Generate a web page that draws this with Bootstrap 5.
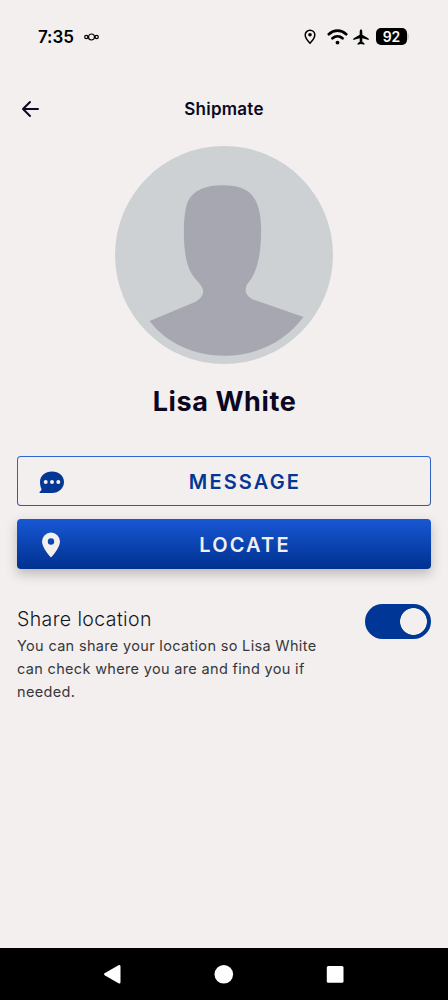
<!DOCTYPE html>
<html lang="en">
<head>
<meta charset="utf-8">
<meta name="viewport" content="width=device-width, initial-scale=1">
<title>Shipmate</title>
<link href="https://cdn.jsdelivr.net/npm/bootstrap@5.3.0/dist/css/bootstrap.min.css" rel="stylesheet">
<style>
body{background:#f2efee;font-family:Inter,"Open Sans",sans-serif;color:#0b0722}
svg{display:block;flex:none}
.screen{height:1000px;overflow:hidden}
.status{height:73px;padding:0 39px 0 38px;color:#000}
.clock{font-size:17px;font-weight:600;letter-spacing:-.1px;width:46px;line-height:20px}
.wifi{margin-left:11px}
.plane{margin-left:5px}
.battery{width:31px;height:17px;border-radius:5px;background:#000;color:#fff;font-size:14px;font-weight:600;line-height:17px;margin-left:7px}
.battery-cap{width:2px;height:7px;background:#cfcccb;border-radius:0 2px 2px 0}
.topbar{height:73px;padding:0 20px}
.topbar h1{font-size:17px;font-weight:600;letter-spacing:.25px}
.side{width:22px}
.person{font-size:27px;font-weight:700;line-height:34px;margin-top:21px;letter-spacing:.6px;padding-left:1px}
.actions{margin-top:37px;padding:0 17px;gap:13px}
.action{height:50px;border-radius:4px;padding:2px 20px 0;font-size:20px;font-weight:600;letter-spacing:2.15px;border:0;line-height:48px}
.action span{padding-left:14px}
.action-outline{color:#043695!important;background:linear-gradient(#f2efee,#f2efee) padding-box,linear-gradient(#2d65d3,#3657a0) border-box;border:1.5px solid transparent;padding:1px 19px 0}
.action-solid,.action-solid:hover{color:#f2efee;background:linear-gradient(#1857d4,#003190);box-shadow:0 5px 12px rgba(70,60,50,.3)}
.share{margin-top:35px;padding:0 17px}
.share h2{font-size:19.5px;font-weight:300;line-height:24px;color:#15151c;padding-top:3px;letter-spacing:.4px}
.share p{font-size:14.5px;line-height:22.8px;color:#37373c;letter-spacing:.33px;width:320px;padding-top:4px}
.form-switch .toggle{width:66px;height:35px;margin:0;background-color:#003797!important;border:0;background-size:27px 27px;background-position:35px center!important;background-image:radial-gradient(circle,#f2efee 13px,transparent 13.7px)!important;background-repeat:no-repeat}
.sysnav{height:52px;background:#000}
</style>
</head>
<body>
<main class="screen d-flex flex-column">
  <div class="status d-flex align-items-center flex-shrink-0">
    <div class="clock">7:35</div>
    <svg width="15" height="8" viewBox="0 0 15 8" fill="none" stroke="#000" stroke-width="1.2"><circle cx="7.5" cy="4" r="3"/><circle cx="2.3" cy="4" r="1.6"/><circle cx="12.7" cy="4" r="1.6"/></svg>
    <div class="d-flex align-items-center ms-auto">
      <svg width="12" height="16" viewBox="0 0 12 16"><path d="M6 1.200A4.800 4.800 0 0 0 1.200 6C1.200 9.300 6 14.200 6 14.200S10.800 9.300 10.800 6A4.800 4.800 0 0 0 6 1.200Z" fill="none" stroke="#000" stroke-width="1.500"/><circle cx="6" cy="5.800" r="1.800"/></svg>
      <svg class="wifi" width="21" height="16" viewBox="0 0 21 16" fill="none" stroke="#000" stroke-width="2.700" stroke-linecap="round"><path d="M1.800 5.200C6.800.5 14.200.5 19.200 5.200M5.500 9.300C8.400 6.600 12.600 6.600 15.500 9.300"/><circle cx="10.500" cy="13.600" r="1.900" fill="#000" stroke="none"/></svg>
      <svg class="plane" width="16" height="16" viewBox="0 0 16 16"><path d="M8 .3Q9.300.6 9.300 2.400V5.700L15.200 9.200Q16 9.800 15.800 11L9.300 9.200V12.800L11.400 14.300V15.800L8 14.900L4.600 15.800V14.300L6.700 12.800V9.200L.2 11Q0 9.800.8 9.200L6.700 5.700V2.400Q6.700.6 8 .3Z"/></svg>
      <div class="battery text-center">92</div><div class="battery-cap"></div>
    </div>
  </div>
  <header class="topbar d-flex align-items-center justify-content-between flex-shrink-0">
    <div class="side"><svg width="22" height="20" viewBox="0 0 22 20" fill="none" stroke="#0b0722" stroke-width="2" stroke-linecap="round" stroke-linejoin="round"><path d="M18 9H3M10 2L3 9L10 16"/></svg></div>
    <h1 class="mb-0">Shipmate</h1>
    <div class="side"></div>
  </header>
  <svg class="mx-auto" width="218" height="218" viewBox="115 145.500 218 218"><circle cx="224" cy="254.500" r="109" fill="#cdd1d4"/><path d="M223 184.800C237 184.800 249 188 255 199C262 211 262 232 260 250C258 266 254 276 247 284C244 290 246 296 253 299L303.500 316.500C285 341 257 355.200 225 355.200C194 355.200 167 343 149.500 320.500L195 301.500C202 298 205 292 202 287C198 279 191 277 187 262C183 247 183 220 186 207C190 190 205 184.800 223 184.800Z" fill="#a6a7b1"/></svg>
  <h2 class="person text-center mb-0">Lisa White</h2>
  <div class="actions d-flex flex-column">
    <button class="btn action action-outline d-flex align-items-center w-100">
      <svg width="28" height="26" viewBox="0 0 28 26"><path d="M15 2.500C22 2.500 27 7 27 13S22 24 15 24H3C2.300 24 2.300 23 3 22.500C4.200 21.700 4.500 21 4.500 20C3.500 18 3 15.500 3 13C3 7 8 2.500 15 2.500Z" fill="#043695"/><g fill="#f2efee"><circle cx="8.700" cy="13" r="2"/><circle cx="15" cy="13" r="2"/><circle cx="21.300" cy="13" r="2"/></g></svg>
      <span class="flex-fill text-center">MESSAGE</span>
    </button>
    <button class="btn action action-solid d-flex align-items-center w-100">
      <svg width="28" height="26" viewBox="0 0 28 26"><path d="M14 .5A9 9 0 0 0 5 9.500C5 16 14 25.500 14 25.500S23 16 23 9.500A9 9 0 0 0 14 .5ZM14 6.300A3.200 3.200 0 1 1 14 12.700A3.200 3.200 0 0 1 14 6.300Z" fill="#f2efee" fill-rule="evenodd"/></svg>
      <span class="flex-fill text-center">LOCATE</span>
    </button>
  </div>
  <section class="share d-flex justify-content-between">
    <div><h2 class="mb-0">Share location</h2><p class="mb-0">You can share your location so Lisa White<br>can check where you are and find you if<br>needed.</p></div>
    <div class="form-switch p-0"><input class="form-check-input toggle" type="checkbox" role="switch" aria-label="Share location" checked></div>
  </section>
  <nav class="sysnav mt-auto flex-shrink-0 d-flex justify-content-center align-items-center">
    <svg width="448" height="52" fill="#fff"><path d="M105 25L118.500 17.300Q120.500 16.300 120.500 18.500V34Q120.500 36.200 118.500 35.200L105 27.500Q103 26.200 105 25Z"/><circle cx="223.800" cy="26.300" r="9.300"/><rect x="326.800" y="18" width="16.700" height="16.700" rx="1.500"/></svg>
  </nav>
</main>
<script src="https://cdn.jsdelivr.net/npm/bootstrap@5.3.0/dist/js/bootstrap.bundle.min.js"></script>
</body>
</html>
